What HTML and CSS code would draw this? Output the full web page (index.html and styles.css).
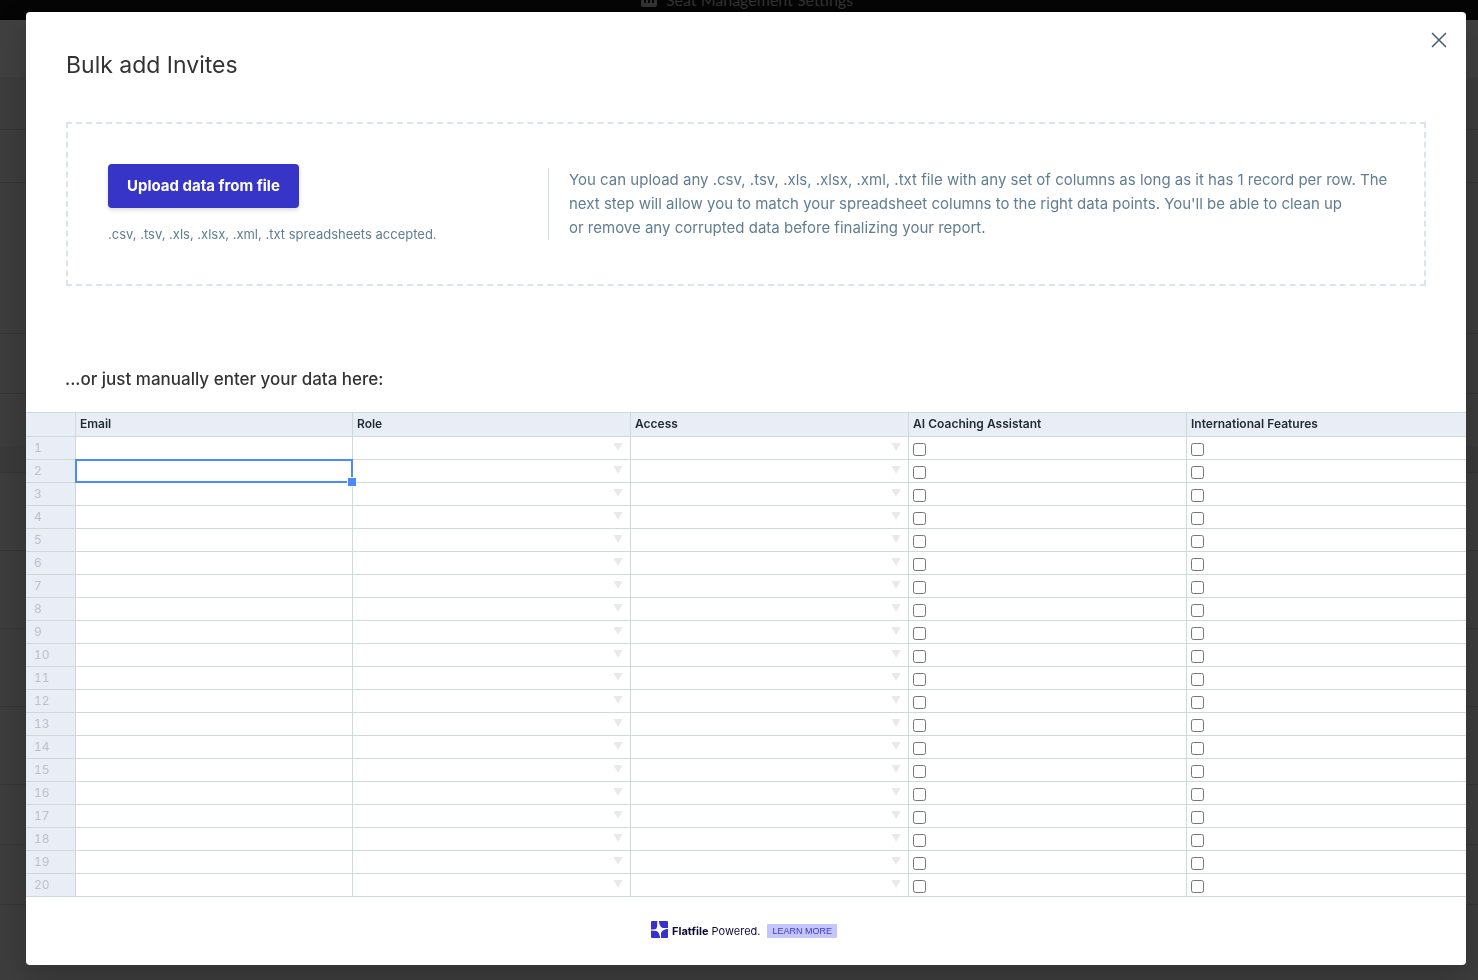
FILE: index.html
```html
<!DOCTYPE html>
<html lang="en">
<head>
<meta charset="utf-8">
<title>Bulk add Invites</title>
<link rel="stylesheet" href="styles.css">
</head>
<body>
<div class="page" aria-hidden="true">
  <div class="page-header">
    <svg class="page-icon" width="16" height="16" viewBox="0 0 16 16"><rect width="16" height="16" rx="2" fill="currentColor"/><path d="M4 6v6M8 3v9M12 6v6" stroke="#050505" stroke-width="2"/></svg>
    <span>Seat Management Settings</span>
  </div>
  <div class="band band-top"></div>
  <div class="band band-intro"></div>
  <div class="band band-intro"></div>
  <div class="band band-tall"></div>
  <div class="band band-small"></div>
  <div class="band band-title"></div>
  <div class="band band-head"></div>
  <div class="band band-row"></div>
  <div class="band band-row"></div>
  <div class="band band-row"></div>
  <div class="band band-row"></div>
  <div class="band band-small"></div>
  <div class="band band-small"></div>
</div>

<div class="overlay">
  <main class="modal" role="dialog" aria-labelledby="modal-title">
    <button class="close" type="button" aria-label="Close">
      <svg width="16" height="16" viewBox="0 0 16 16" fill="none" stroke="currentColor" stroke-width="1.5"><path d="M1 1l14 14M15 1L1 15"/></svg>
    </button>
    <h1 class="title" id="modal-title">Bulk add Invites</h1>

    <section class="dropzone">
      <div class="upload">
        <button class="upload-button" type="button">Upload data from file</button>
        <p class="upload-note">.csv, .tsv, .xls, .xlsx, .xml, .txt spreadsheets accepted.</p>
      </div>
      <p class="help">You can upload any .csv, .tsv, .xls, .xlsx, .xml, .txt file with any set of columns as long as it has 1 record per row. The<br>next step will allow you to match your spreadsheet columns to the right data points. You'll be able to clean up<br>or remove any corrupted data before finalizing your report.</p>
    </section>

    <h2 class="subtitle">...or just manually enter your data here:</h2>

    <table class="sheet">
      <thead>
        <tr>
          <th class="corner"></th>
          <th class="email" scope="col">Email</th>
          <th class="field" scope="col">Role</th>
          <th class="field" scope="col">Access</th>
          <th class="field" scope="col">AI Coaching Assistant</th>
          <th scope="col">International Features</th>
        </tr>
      </thead>
      <tbody id="rows"></tbody>
    </table>

    <footer class="footer">
      <svg class="logo" width="17" height="17" viewBox="0 0 17 17"><rect width="17" height="17" rx="1" fill="#3832c8"/><path d="M6.500 0Q7 5 5.500 7.500Q4 9 0 9.300Q5.500 9.500 7 11Q8.500 12.500 9.300 17Q9.500 12 11 10.200Q12.500 8.500 17 7.500Q12 7.500 10 6Q8.500 4.500 7.800 0z" fill="#fff"/><path d="M7 0v5M0 9h5M9.500 12v5M12 7.500h5" stroke="#fff"/></svg>
      <span class="brand"><strong>Flatfile</strong> Powered.</span>
      <a class="learn" href="#">LEARN MORE</a>
    </footer>
  </main>
</div>
<script src="rows.js"></script>
</body>
</html>
```
FILE: styles.css
```css
* {
  box-sizing: border-box;
}

body {
  margin: 0;
  background: #3d3d3d;
  font-family: Inter, "Liberation Sans", sans-serif;
  color: #333;
}

h1, h2, p {
  margin: 0;
}

button {
  border: 0;
  cursor: pointer;
  font-family: inherit;
}

/* Dimmed page behind the dialog */
.page {
  position: fixed;
  inset: 0;
  overflow: hidden;
}

.page-header {
  display: flex;
  align-items: flex-end;
  justify-content: center;
  gap: 9px;
  height: 20px;
  padding: 0 0 11px 16px;
  overflow: hidden;
  background: #050505;
  color: #333;
  font: 16px/18px Lato, sans-serif;
}

.page-icon {
  flex: none;
  margin-bottom: 2px;
}

.band {
  border-bottom: 1px solid #353535;
}

.band-top {
  height: 57px;
  border: 0;
  background: #404040;
}

.band-intro { height: 53px; }
.band-small { height: 60px; }
.band-tall { height: 151px; }
.band-title { height: 52px; border: 0; }
.band-head { height: 27px; background: #3a3a3a; }
.band-row { height: 78px; }

/* Dialog */
.overlay {
  position: relative;
  padding: 12px 12px 15px 26px;
}

.modal {
  position: relative;
  padding-top: 36px;
  border-radius: 4px;
  background: #fff;
  box-shadow: 0 12px 32px rgba(0, 0, 0, 0.2);
}

.close {
  position: absolute;
  top: 20px;
  right: 19px;
  display: flex;
  padding: 0;
  background: none;
  color: #3f5a72;
}

.title {
  padding: 0 40px;
  font-size: 23px;
  font-weight: 400;
  line-height: 34px;
}

.dropzone {
  display: flex;
  align-items: center;
  margin: 40px 40px 0;
  padding: 40px 32px 40px 40px;
  border: 2px dashed #dae4ef;
}

.upload {
  flex: none;
  width: 440px;
}

.upload-button {
  height: 44px;
  padding: 0 19px 2px;
  border-radius: 4px;
  background: #3735c7;
  box-shadow: 0 2px 4px rgba(0, 0, 0, 0.15);
  color: #fff;
  font-size: 15px;
  font-weight: 700;
}

.upload-note {
  margin-top: 16px;
  color: #627d91;
  font-size: 13px;
  line-height: 20px;
}

.help {
  padding-left: 20px;
  border-left: 1px solid #cfdcda;
  color: #627d91;
  font-size: 15px;
  line-height: 24px;
}

.subtitle {
  margin: 80px 39px 20px;
  font-size: 17px;
  font-weight: 500;
  line-height: 26px;
}

/* Spreadsheet */
.sheet {
  width: 100%;
  table-layout: fixed;
  border-collapse: separate;
  border-spacing: 0;
  border-top: 1px solid #cddad8;
  font-size: 12px;
  font-variant-numeric: tabular-nums;
}

.sheet th,
.sheet td {
  height: 23px;
  padding: 0 4px;
  border-right: 1px solid #cddad8;
  border-bottom: 1px solid #cddad8;
  line-height: 22px;
  text-align: left;
  vertical-align: top;
}

.sheet th:last-child,
.sheet td:last-child {
  border-right: 0;
}

.sheet thead th {
  height: 24px;
  background: #e8edf6;
  color: #1f2a33;
  font-weight: 600;
}

.sheet .corner {
  width: 50px;
}

.sheet .email {
  width: 277px;
}

.sheet .field {
  width: 278px;
}

.sheet tbody th {
  padding-left: 8px;
  background: #e8edf6;
  color: #bcc1ca;
  font-weight: 400;
}

.sheet .choice {
  padding-right: 7px;
  line-height: 20px;
  text-align: right;
}

.choice button {
  padding: 0;
  background: none;
  color: #e9e9e9;
  font-size: 10px;
  line-height: 20px;
  vertical-align: top;
}

.sheet input {
  display: block;
  width: 13px;
  height: 13px;
  margin: 6px 0 0;
}

.sheet .selected {
  position: relative;
}

.selection {
  position: absolute;
  inset: -1px;
  border: 2px solid #4b89ff;
}

.selection::after {
  content: "";
  position: absolute;
  right: -6px;
  bottom: -6px;
  width: 8px;
  height: 8px;
  border: 1px solid #fff;
  background: #4b89ff;
}

/* Footer */
.footer {
  display: flex;
  align-items: center;
  justify-content: center;
  height: 68px;
  padding-right: 4px;
}

.logo {
  margin-bottom: 3px;
}

.brand {
  margin: 0 7px 0 4px;
  color: #0e0b35;
  font-size: 11px;
}

.learn {
  padding: 0 5px;
  border-radius: 1px;
  background: #c3c5fb;
  color: #3d38c9;
  font: 9px/14px "Liberation Sans", sans-serif;
  text-decoration: none;
}
```
FILE: rows.js
```js
const body = document.getElementById("rows");
const ROW_COUNT = 20;
const SELECTED_ROW = 2;

for (let n = 1; n <= ROW_COUNT; n++) {
  const email = n === SELECTED_ROW
    ? '<td class="selected"><div class="selection"></div></td>'
    : "<td></td>";
  body.insertAdjacentHTML("beforeend", `<tr>
    <th scope="row">${n}</th>
    ${email}
    <td class="choice"><button type="button" aria-label="Role, row ${n}">▼</button></td>
    <td class="choice"><button type="button" aria-label="Access, row ${n}">▼</button></td>
    <td><input type="checkbox" aria-label="AI Coaching Assistant, row ${n}"></td>
    <td><input type="checkbox" aria-label="International Features, row ${n}"></td>
  </tr>`);
}
```
